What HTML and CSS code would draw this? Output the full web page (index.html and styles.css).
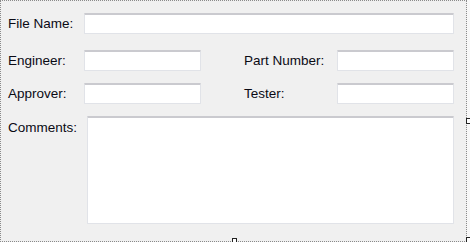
FILE: index.html
```html
<!DOCTYPE html>
<html lang="en">
<head>
  <meta charset="UTF-8" />
  <title>Document Details</title>
  <link rel="stylesheet" href="styles.css">
</head>
<body>
  <div class="form-surface">
    <div class="form">
      <div class="row">
        <label class="lbl lbl-first">File Name:</label>
        <input class="box box-wide" type="text">
      </div>
      <div class="row row-pair">
        <label class="lbl lbl-first">Engineer:</label>
        <input class="box box-short" type="text">
        <label class="lbl lbl-second">Part Number:</label>
        <input class="box box-short" type="text">
      </div>
      <div class="row row-pair2">
        <label class="lbl lbl-first">Approver:</label>
        <input class="box box-short" type="text">
        <label class="lbl lbl-second">Tester:</label>
        <input class="box box-short" type="text">
      </div>
      <div class="row row-comments">
        <label class="lbl lbl-comments">Comments:</label>
        <textarea class="box box-area"></textarea>
      </div>
    </div>
    <span class="grip grip-right"></span>
    <span class="grip grip-bottom"></span>
    <span class="grip grip-corner"></span>
  </div>
</body>
</html>
```

FILE: styles.css
```css
* {
  box-sizing: border-box;
}
body {
  margin: 0;
  background: #f7f7f7;
  font-family: "Liberation Sans", Arial, sans-serif;
  font-size: 13.5px;
  color: #0a0a14;
}
.form-surface {
  position: relative;
  width: 467px;
  height: 242px;
  border: 1px dotted #8a8a8a;
  background: #f0f0f0;
}
.form {
  display: flex;
  flex-direction: column;
  padding: 12px 0 0 7px;
}
.row {
  display: flex;
  align-items: center;
  height: 21px;
}
.row-pair {
  margin-top: 16px;
}
.row-pair2 {
  margin-top: 12px;
}
.row-comments {
  margin-top: 12px;
  align-items: flex-start;
  height: 108px;
}
.lbl {
  white-space: nowrap;
  line-height: 16px;
  padding-top: 1px;
}
.lbl-first {
  width: 76px;
}
.lbl-second {
  width: 93px;
  margin-left: 43px;
}
.lbl-comments {
  width: 79px;
  padding-top: 4px;
}
.box {
  margin: 0;
  padding: 0;
  background: #fff;
  border: 1px solid #e1e3e8;
  border-top: 2px solid #cacacf;
  border-radius: 1px;
  font: inherit;
  outline: none;
  resize: none;
}
.box-wide {
  width: 370px;
  height: 21px;
}
.box-short {
  width: 117px;
  height: 21px;
}
.box-area {
  width: 367px;
  height: 108px;
}
.grip {
  position: absolute;
  width: 5px;
  height: 6px;
  background: #fff;
  border: 1px solid #222;
}
.grip-right {
  left: 465px;
  top: 117px;
}
.grip-bottom {
  left: 231px;
  top: 237px;
}
.grip-corner {
  left: 465px;
  top: 236px;
}
```
